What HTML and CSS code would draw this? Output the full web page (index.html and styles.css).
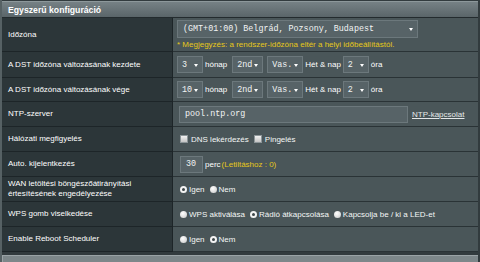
FILE: index.html
```html
<!DOCTYPE html>
<html lang="hu">
<head>
<meta charset="utf-8">
<title>Egyszerű konfiguráció</title>
<link rel="stylesheet" href="styles.css">
</head>
<body>
<div class="panel">
  <div class="hdr">Egyszerű konfiguráció</div>
  <table class="form">
    <tr class="r-tz">
      <th>Időzóna</th>
      <td>
        <div class="stack">
          <span class="sel sel-tz">(GMT+01:00) Belgrád, Pozsony, Budapest<i class="arr"></i></span>
          <span class="note">* Megjegyzés: a rendszer-időzóna eltér a helyi időbeállítástól.</span>
        </div>
      </td>
    </tr>
    <tr class="r-dst1">
      <th>A DST időzóna változásának kezdete</th>
      <td>
        <div class="line">
          <span class="sel sel-m">3<i class="arr"></i></span><span class="txt">hónap</span>
          <span class="sel sel-w">2nd<i class="arr"></i></span>
          <span class="sel sel-d">Vas.<i class="arr"></i></span><span class="txt">Hét &amp; nap</span>
          <span class="sel sel-h">2<i class="arr"></i></span><span class="txt">óra</span>
        </div>
      </td>
    </tr>
    <tr class="r-dst2">
      <th>A DST időzóna változásának vége</th>
      <td>
        <div class="line">
          <span class="sel sel-m">10<i class="arr"></i></span><span class="txt">hónap</span>
          <span class="sel sel-w">2nd<i class="arr"></i></span>
          <span class="sel sel-d">Vas.<i class="arr"></i></span><span class="txt">Hét &amp; nap</span>
          <span class="sel sel-h">2<i class="arr"></i></span><span class="txt">óra</span>
        </div>
      </td>
    </tr>
    <tr>
      <th>NTP-szerver</th>
      <td>
        <div class="line">
          <span class="inp inp-ntp">pool.ntp.org</span>
          <a class="link">NTP-kapcsolat</a>
        </div>
      </td>
    </tr>
    <tr>
      <th>Hálózati megfigyelés</th>
      <td>
        <div class="line">
          <span class="chk"></span><span class="lbl">DNS lekérdezés</span>
          <span class="chk"></span><span class="lbl">Pingelés</span>
        </div>
      </td>
    </tr>
    <tr>
      <th>Auto. kijelentkezés</th>
      <td>
        <div class="line">
          <span class="inp inp-num">30</span><span class="txt">perc</span><span class="note">(Letiltáshoz : 0)</span>
        </div>
      </td>
    </tr>
    <tr>
      <th class="two">WAN letöltési böngészőátirányítási<br>értesítésének engedélyezése</th>
      <td>
        <div class="line">
          <span class="rad on"></span><span class="lbl">Igen</span>
          <span class="rad"></span><span class="lbl">Nem</span>
        </div>
      </td>
    </tr>
    <tr>
      <th>WPS gomb viselkedése</th>
      <td>
        <div class="line">
          <span class="rad"></span><span class="lbl">WPS aktiválása</span>
          <span class="rad on"></span><span class="lbl">Rádió átkapcsolása</span>
          <span class="rad"></span><span class="lbl">Kapcsolja be / ki a LED-et</span>
        </div>
      </td>
    </tr>
    <tr>
      <th>Enable Reboot Scheduler</th>
      <td>
        <div class="line">
          <span class="rad"></span><span class="lbl">Igen</span>
          <span class="rad on"></span><span class="lbl">Nem</span>
        </div>
      </td>
    </tr>
  </table>
  <div class="foot"></div>
</div>
</body>
</html>
```

FILE: styles.css
```css
html, body {
  margin: 0;
  padding: 0;
}
body {
  background: #4f5a5d;
  font-family: "Liberation Sans", Arial, sans-serif;
  font-size: 8px;
  color: #ffffff;
  width: 480px;
  height: 262px;
  overflow: hidden;
}
.panel {
  padding: 1px 2px 0 2px;
  background: linear-gradient(90deg, #566164 0, #566164 2px, #323b3e 2px);
}
.hdr {
  box-sizing: border-box;
  height: 17px;
  border-top: 1px solid #8d989b;
  border-bottom: 1px solid #232b2e;
  background: linear-gradient(#768185, #5a6569);
  font-weight: bold;
  font-size: 8.7px;
  padding-left: 6px;
  display: flex;
  align-items: center;
  color: #ffffff;
}
.form {
  width: 476px;
  border-collapse: collapse;
  border-spacing: 0;
}
.form th {
  width: 164px;
  text-align: left;
  font-weight: normal;
  background: #2c3639;
  padding: 0 0 0 6px;
  border-bottom: 1px solid #1d2528;
  height: 24px;
  line-height: 10px;
  color: #ffffff;
}
.form td {
  background: #4a5659;
  border-bottom: 1px solid #2a3336;
  border-left: 1px solid #1d2528;
  padding: 0 0 0 4px;
  height: 24px;
}
.form .r-tz th, .form .r-tz td { height: 33px; }
.form .r-dst1 th, .form .r-dst1 td { height: 25px; }
.form .r-dst2 th, .form .r-dst2 td { height: 23px; }

.stack {
  display: flex;
  flex-direction: column;
  align-items: flex-start;
  gap: 2px;
}
.line {
  display: flex;
  align-items: center;
}
.sel, .inp {
  box-sizing: border-box;
  display: inline-flex;
  align-items: center;
  position: relative;
  height: 17px;
  background: #576367;
  border: 1px solid #6c787c;
  font-family: "Liberation Mono", "Courier New", monospace;
  font-size: 8.4px;
  color: #f2f4f4;
  padding-left: 4px;
}
.sel-tz { width: 241px; height: 18px; padding-left: 5px; }
.sel-m { width: 26px; }
.sel-w { width: 31px; margin-left: 5px; }
.sel-d { width: 36px; margin-left: 4px; }
.sel-h { width: 26px; margin-left: 2px; }
.arr {
  position: absolute;
  right: 4px;
  top: 50%;
  margin-top: -1px;
  width: 0;
  height: 0;
  border-left: 2px solid transparent;
  border-right: 2px solid transparent;
  border-top: 3px solid #ffffff;
}
.txt {
  margin-left: 2px;
}
.note {
  color: #e6c81a;
  margin-left: 1px;
}
.stack .note { margin-left: 0; }
.inp-ntp { width: 229px; margin-left: 2px; padding-left: 5px; }
.inp-num { width: 23px; margin-left: 3px; padding-left: 5px; }
.link {
  margin-left: 4px;
  color: #e4e7e8;
  text-decoration: underline;
}
.chk {
  width: 6px;
  height: 6px;
  background: linear-gradient(#f2f2f2, #c4c4c4);
  border: 1px solid #8d9699;
  margin-left: 3px;
  margin-right: 3px;
}
.chk + .lbl + .chk { margin-left: 5px; }
.rad {
  box-sizing: border-box;
  width: 7px;
  height: 7px;
  border-radius: 50%;
  background: radial-gradient(circle at 40% 35%, #ffffff, #c8c8c8);
  margin-left: 3px;
  margin-right: 2px;
}
.rad.on {
  background: #3d4649;
  border: 2px solid #f4f4f4;
}
.lbl + .rad { margin-left: 5px; }
.lbl { color: #f4f6f6; }
.foot {
  margin-top: 3px;
  height: 9px;
  background: #7d878a;
  border-top: 1px solid #9aa3a6;
  border-left: 1px solid #9aa3a6;
}
```
